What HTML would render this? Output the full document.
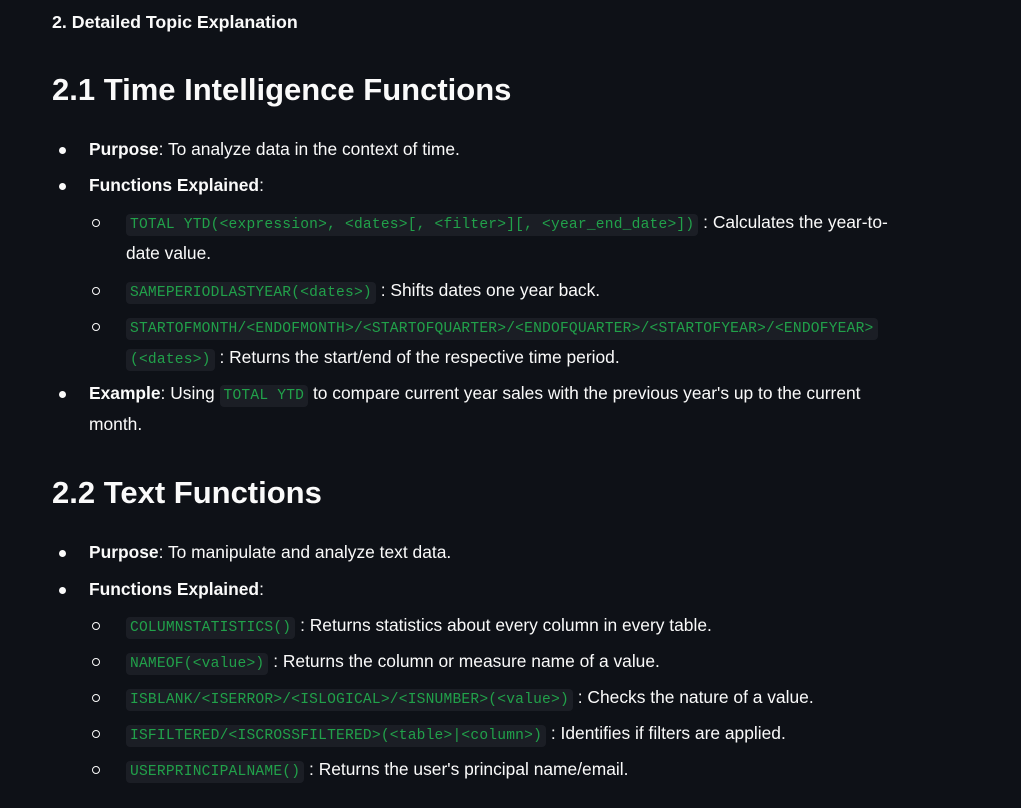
<!DOCTYPE html>
<html><head><meta charset="utf-8"><style>
html,body{margin:0;padding:0;background:#0e1117;width:1021px;height:808px;overflow:hidden}
body{position:relative;color:#fafafa;font-family:"Liberation Sans",sans-serif;font-size:17.4px}
.l{position:absolute;white-space:nowrap;height:30px;line-height:30px}
b{font-weight:700}
code{font-family:"Liberation Mono",monospace;font-size:14.6px;color:#21a14a;background:#1b1e25;border-radius:4px;padding:3px 4px;letter-spacing:0.2px}
.d{position:absolute;width:7px;height:7px;border-radius:50%;background:#fafafa}
.c{position:absolute;width:6px;height:6px;border-radius:50%;border:1.5px solid #fafafa}
h{position:absolute;font-weight:700;font-size:31px;white-space:nowrap;line-height:40px}
</style></head><body>
<div class="l" style="left:52px;top:7px;font-weight:700;font-size:17.8px">2. Detailed Topic Explanation</div>
<h style="left:52px;top:70px">2.1 Time Intelligence Functions</h>

<div class="d" style="left:59px;top:147px"></div>
<div class="l" style="left:89px;top:134px"><b>Purpose</b>: To analyze data in the context of time.</div>
<div class="d" style="left:59px;top:183px"></div>
<div class="l" style="left:89px;top:170px"><b>Functions Explained</b>:</div>

<div class="c" style="left:92px;top:219px"></div>
<div class="l" style="left:126px;top:207px"><code>TOTAL YTD(&lt;expression&gt;, &lt;dates&gt;[, &lt;filter&gt;][, &lt;year_end_date&gt;])</code> : Calculates the year-to-</div>
<div class="l" style="left:126px;top:238px">date value.</div>
<div class="c" style="left:92px;top:287px"></div>
<div class="l" style="left:126px;top:275px"><code>SAMEPERIODLASTYEAR(&lt;dates&gt;)</code> : Shifts dates one year back.</div>
<div class="c" style="left:92px;top:323px"></div>
<div class="l" style="left:126px;top:311px"><code>STARTOFMONTH/&lt;ENDOFMONTH&gt;/&lt;STARTOFQUARTER&gt;/&lt;ENDOFQUARTER&gt;/&lt;STARTOFYEAR&gt;/&lt;ENDOFYEAR&gt;</code></div>
<div class="l" style="left:126px;top:342px"><code>(&lt;dates&gt;)</code> : Returns the start/end of the respective time period.</div>

<div class="d" style="left:59px;top:391px"></div>
<div class="l" style="left:89px;top:378px"><b>Example</b>: Using <code>TOTAL YTD</code> to compare current year sales with the previous year's up to the current</div>
<div class="l" style="left:89px;top:409px">month.</div>

<h style="left:52px;top:473px">2.2 Text Functions</h>

<div class="d" style="left:59px;top:550px"></div>
<div class="l" style="left:89px;top:537px"><b>Purpose</b>: To manipulate and analyze text data.</div>
<div class="d" style="left:59px;top:587px"></div>
<div class="l" style="left:89px;top:574px"><b>Functions Explained</b>:</div>

<div class="c" style="left:92px;top:622px"></div>
<div class="l" style="left:126px;top:610px"><code>COLUMNSTATISTICS()</code> : Returns statistics about every column in every table.</div>
<div class="c" style="left:92px;top:658px"></div>
<div class="l" style="left:126px;top:646px"><code>NAMEOF(&lt;value&gt;)</code> : Returns the column or measure name of a value.</div>
<div class="c" style="left:92px;top:694px"></div>
<div class="l" style="left:126px;top:682px"><code>ISBLANK/&lt;ISERROR&gt;/&lt;ISLOGICAL&gt;/&lt;ISNUMBER&gt;(&lt;value&gt;)</code> : Checks the nature of a value.</div>
<div class="c" style="left:92px;top:730px"></div>
<div class="l" style="left:126px;top:718px"><code>ISFILTERED/&lt;ISCROSSFILTERED&gt;(&lt;table&gt;|&lt;column&gt;)</code> : Identifies if filters are applied.</div>
<div class="c" style="left:92px;top:766px"></div>
<div class="l" style="left:126px;top:754px"><code>USERPRINCIPALNAME()</code> : Returns the user's principal name/email.</div>
</body></html>
